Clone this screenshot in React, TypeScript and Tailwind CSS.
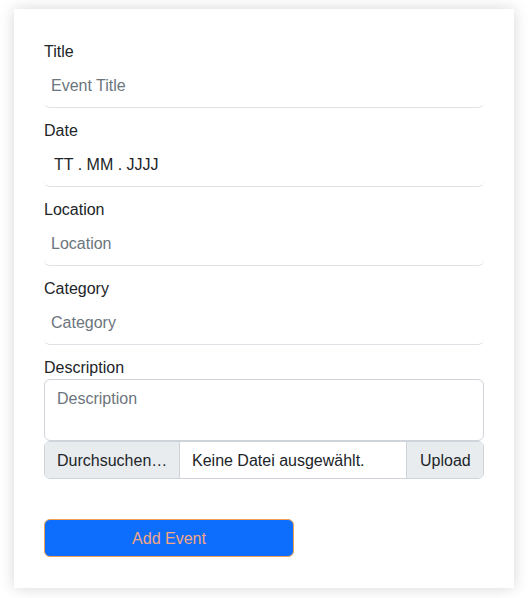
import React from 'react';

const font = { fontFamily: '"Liberation Sans", Arial, sans-serif' };

const LineField = ({ label, placeholder }: { label: string; placeholder: string }) => (
  <div className="flex flex-col mb-[10px]">
    <label className="text-[16px] leading-[24px] pt-[1px] -mb-[1px] text-[#212529]">{label}</label>
    <input
      placeholder={placeholder}
      className="h-[45px] w-full px-[7px] pt-[2px] text-[16px] text-[#212529] placeholder:text-[#6c757d] border-b border-[#dee2e6] rounded-b-md outline-none bg-white"
    />
  </div>
);

const App: React.FC = () => {
  return (
    <div className="min-h-[598px] w-[530px] bg-white pl-[14px] pt-[9px]" style={font}>
      <div className="w-[500px] bg-white px-[30px] pt-[30px] pb-[31px] shadow-[0_0_14px_rgba(0,0,0,0.16)]">
        <LineField label="Title" placeholder="Event Title" />
        <div className="flex flex-col mb-[10px]">
          <label className="text-[16px] leading-[24px] pt-[1px] -mb-[1px] text-[#212529]">Date</label>
          <div className="h-[45px] flex items-center pl-[10px] pt-[2px] text-[16px] text-[#212529] border-b border-[#dee2e6] rounded-b-md">
            TT . MM . JJJJ
          </div>
        </div>
        <LineField label="Location" placeholder="Location" />
        <LineField label="Category" placeholder="Category" />
        <div className="flex flex-col">
          <label className="text-[16px] leading-[24px] pt-[1px] -mb-[1px] text-[#212529]">Description</label>
          <textarea
            placeholder="Description"
            className="h-[62px] w-full resize-none border border-[#ced4da] rounded-md px-[12px] pt-[7px] pb-[5px] text-[16px] leading-[24px] placeholder:text-[#6c757d] outline-none"
          />
          <div className="flex h-[38px] border border-[#ced4da] rounded-md overflow-hidden text-[16px] text-[#212529]">
            <div className="flex items-center px-[12px] pt-[2px] w-[135px] bg-[#e9ecef] border-r border-[#ced4da] whitespace-nowrap">
              Durchsuchen…
            </div>
            <div className="flex-1 flex items-center px-[12px] pt-[2px] bg-white">Keine Datei ausgewählt.</div>
            <div className="flex items-center w-[77px] px-[13px] pt-[2px] bg-[#e9ecef] border-l border-[#ced4da]">Upload</div>
          </div>
        </div>
        <button className="mt-[40px] w-[250px] h-[38px] pt-[2px] rounded-md bg-[#0d6efd] border border-[#f0a050] text-[16px] text-[#f4a583]">
          Add Event
        </button>
      </div>
    </div>
  );
};

export default App;
